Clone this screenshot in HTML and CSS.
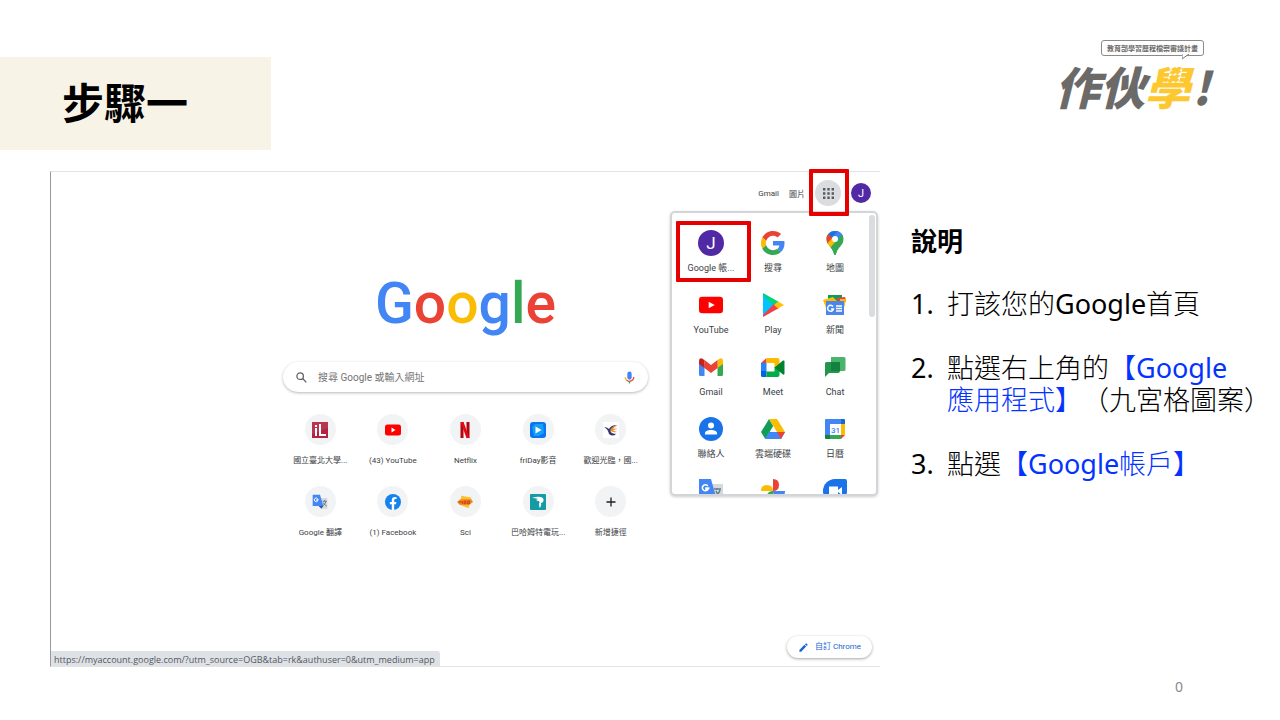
FILE: index.html
```html
<!DOCTYPE html>
<html lang="zh-Hant">
<head>
<meta charset="utf-8">
<meta name="viewport" content="width=device-width, initial-scale=1">
<title>步驟一</title>
<link rel="stylesheet" href="styles.css">
</head>
<body>
<div class="slide">
  <header class="slide-head">
    <h1 class="step-title">步驟一</h1>
    <div class="brand">
      <div class="brand-bubble">教育部學習歷程檔案審議計畫
        <svg class="brand-tail" viewBox="0 0 8 6" aria-hidden="true"><path d="M0 0v5l7-5" fill="#fff" stroke="#777" stroke-width="1"/></svg>
      </div>
      <div class="brand-name">作伙<span class="brand-accent">學</span><span class="brand-mark">!</span></div>
    </div>
  </header>

  <main class="content">
    <section class="browser" aria-label="Google 首頁">
      <nav class="topbar">
        <a href="#">Gmail</a>
        <a href="#">圖片</a>
        <button class="apps-button" type="button" aria-label="Google 應用程式">
          <svg viewBox="0 0 12 12" fill="#555a5f"><path d="M0 0h2.600v2.600H0zM4.700 0h2.600v2.600H4.700zM9.400 0H12v2.600H9.400zM0 4.700h2.600v2.600H0zM4.700 4.700h2.600v2.600H4.700zM9.400 4.700H12v2.600H9.400zM0 9.400h2.600V12H0zM4.700 9.400h2.600V12H4.700zM9.400 9.400H12V12H9.400z"/></svg>
        </button>
        <button class="avatar" type="button">J</button>
      </nav>

      <div class="home">
        <div class="wordmark" aria-label="Google"><span class="blue">G</span><span class="red">o</span><span class="yellow">o</span><span class="blue">g</span><span class="green">l</span><span class="red">e</span></div>
        <form class="search">
          <svg class="search-icon" viewBox="0 0 24 24" fill="none" stroke="#5f6368" stroke-width="2.400"><circle cx="9.500" cy="9.500" r="6"/><path d="M14 14l7 7"/></svg>
          <input type="text" aria-label="搜尋" placeholder="搜尋 Google 或輸入網址">
          <svg class="mic-icon" viewBox="0 0 24 24"><rect x="8" y="1" width="8" height="15" rx="4" fill="#4285f4"/><path d="M4 11c0 2.500.8 4.300 2.300 5.800" fill="none" stroke="#fbbc04" stroke-width="2.200"/><path d="M6.300 16.500A8 8 0 0 0 20 11" fill="none" stroke="#ea4335" stroke-width="2.200"/><path d="M12 19v4" stroke="#34a853" stroke-width="2.400"/></svg>
        </form>
        <ul class="shortcuts">
          <li><a href="#"><span class="disc"><svg viewBox="0 0 16 16"><rect width="16" height="16" fill="#b3223f"/><path d="M0 0h16v6L0 12z" fill="#c24a62" opacity=".5"/><path d="M3 6h2v8H3zM3 3h2v2H3zM7 2h2v10h5v2H7z" fill="#fff"/></svg></span>國立臺北大學...</a></li>
          <li><a href="#"><span class="disc"><svg viewBox="0 0 16 16"><rect y="2.500" width="16" height="11" rx="2.500" fill="#f00"/><path d="M6.500 5.500v5l4-2.500z" fill="#fff"/></svg></span>(43) YouTube</a></li>
          <li><a href="#"><span class="disc"><svg viewBox="0 0 16 16"><path d="M3.500 0h3v16h-3zM9.500 0h3v16h-3z" fill="#b1060f"/><path d="M3.500 0h3l6 16h-3z" fill="#e50914"/></svg></span>Netflix</a></li>
          <li><a href="#"><span class="disc"><svg viewBox="0 0 16 16"><rect width="16" height="16" rx="3" fill="#0874f0"/><path d="M2 5l3-3h8l1 9-5 3H4z" fill="#1bb5fa" opacity=".65"/><path d="M5.500 4.500v7l6-3.500z" fill="#fff"/></svg></span>friDay影音</a></li>
          <li><a href="#"><span class="disc"><svg viewBox="0 0 16 16"><path fill="#fff" d="M0 0h16v16H0z"/><path d="M1 5q3 0 5 2 2-4 8-4-4 1-6 5-2 3 5 4-3 3-7 0Q5 7 1 5" fill="#34376f"/><path d="M7 8q2-4 8-5-4 2-5 4 2-1 5 0-4 0-5 2 2 0 4 1-5 1-7-2z" fill="#ea8b35"/></svg></span>歡迎光臨，國...</a></li>
          <li><a href="#"><span class="disc"><svg viewBox="0 0 24 24"><path d="M10 6h13v16H14z" fill="#d5d8dc"/><path d="M1 1h11l5 17H1z" fill="#4285f4"/><path d="M10 18h7l-3 4z" fill="#2956b2"/><path d="M10 8.500H7v1.500h1.800A2.800 2.800 0 1 1 8.500 7" fill="none" stroke="#fff" stroke-width="1.500"/><path d="M16 11h6m-3-2v2m2 0q-1 4-5 7m1-5q1 3 5 5" fill="none" stroke="#617d8b" stroke-width="1.500"/></svg></span>Google 翻譯</a></li>
          <li><a href="#"><span class="disc"><svg viewBox="0 0 16 16"><circle cx="8" cy="8" r="8" fill="#1483ee"/><path d="M6.800 16v-5.700h-2V8h2V6.200c0-2 1.200-3.200 3-3.200l1.800.2v1.900h-1c-1 0-1.400.6-1.400 1.300V8h2.200l-.4 2.300H9.200V16z" fill="#fff"/></svg></span>(1) Facebook</a></li>
          <li><a href="#"><span class="disc"><svg viewBox="0 0 18 16"><path d="M5 1l11 2-3 12-10-4z" fill="#fbc02d"/><path d="M0 8l4-3h12l2 3-4 3H3z" fill="#f0841d"/><path d="M2 8h3m1-1v3m2-3h2v3H8zm4 0h2v3h-2z" fill="none" stroke="#c5351c" stroke-width="1"/></svg></span>Sci</a></li>
          <li><a href="#"><span class="disc"><svg viewBox="0 0 16 16"><rect width="16" height="16" rx="1" fill="#159ba3"/><path d="M2 4q5-2 9-1 3 1 2.500 4-1 2-2.500 2 1 2-1 5-1-1-1-4 1-2 0-3-2 0-3-1l2-1q-3-1-6-1" fill="#fff"/></svg></span>巴哈姆特電玩...</a></li>
          <li><a href="#"><span class="disc"><svg viewBox="0 0 16 16"><path d="M8 3.500v9M3.500 8h9" stroke="#202124" stroke-width="1.300"/></svg></span>新增捷徑</a></li>
        </ul>
      </div>

      <div class="browser-foot">
        <span class="status">https://myaccount.google.com/?utm_source=OGB&amp;tab=rk&amp;authuser=0&amp;utm_medium=app</span>
        <button class="customize" type="button"><svg viewBox="0 0 24 24" fill="#1a64d6"><path d="M3 17.200V21h3.800L17.800 10l-3.800-3.800zM20.700 7a1 1 0 0 0 0-1.400l-2.300-2.300a1 1 0 0 0-1.400 0l-1.800 1.800L19 8.900z"/></svg>自訂 Chrome</button>
      </div>

      <div class="apps-menu">
        <ul class="apps-grid">
          <li class="marked"><a href="#"><span class="app-avatar">J</span>Google 帳...</a></li>
          <li><a href="#"><svg viewBox="0 0 48 48"><path fill="#ea4335" d="M24 9.500c3.500 0 6.700 1.200 9.200 3.600l6.900-6.900C35.900 2.400 30.500 0 24 0 14.600 0 6.500 5.400 2.600 13.200l8 6.200C12.400 13.700 17.700 9.500 24 9.500z"/><path fill="#4285f4" d="M47 24.500c0-1.600-.2-3.100-.4-4.500H24v9h12.900c-.6 3-2.200 5.500-4.700 7.200l7.700 6C44.400 38 47 31.800 47 24.500z"/><path fill="#fbbc05" d="M10.500 28.600a14.500 14.500 0 0 1 0-9.200l-8-6.200a24 24 0 0 0 0 21.600z"/><path fill="#34a853" d="M24 48c6.500 0 11.900-2.100 15.900-5.800l-7.700-6c-2.200 1.500-4.900 2.300-8.200 2.300-6.300 0-11.600-4.200-13.500-9.900l-8 6.200C6.500 42.600 14.600 48 24 48z"/></svg>搜尋</a></li>
          <li><a href="#"><svg viewBox="0 0 24 24"><clipPath id="pin"><path d="M12 0C7.500 0 3.500 3.500 3.500 8c0 6 6 8 7.500 15q1 2 2 0c1.500-7 7.500-9 7.500-15 0-4.500-4-8-8.500-8z"/></clipPath><g clip-path="url(#pin)"><path fill="#34a853" d="M0 0h24v24H0z"/><path fill="#4285f4" d="M9 8l7-9h8v4L12 12z"/><path fill="#ea4335" d="M0 3h6l5 4-7 8-4-6z"/><path fill="#fbbc04" d="M3 14l7-8 5 3-8 9z"/><path fill="#1a73e8" d="M5 3l5 4 6-8H8z"/><path fill="#34a853" d="M7 17L20 2v12l-8 12z"/><path fill="#4285f4" d="M15 8l5-6-5-3-4 6z"/></g><circle cx="12" cy="8" r="3" fill="#fff"/></svg>地圖</a></li>
          <li><a href="#"><svg viewBox="0 0 26 26"><rect y="4" width="26" height="18" rx="3.500" fill="#f00"/><path d="M10.500 9.500v7l6.500-3.500z" fill="#fff"/></svg>YouTube</a></li>
          <li><a href="#"><svg viewBox="0 0 24 24"><path fill="#00c3ff" d="M2 1l11 11L2 23z"/><path fill="#00d27f" d="M2 0l16 9-5 4L2 2z"/><path fill="#f33d48" d="M2 24l16-9-5-4L2 22z"/><path fill="#ffc107" d="M17 8.500L23 12l-6 3.500-4-3.500z"/></svg>Play</a></li>
          <li><a href="#"><svg viewBox="0 0 24 24"><path fill="#0c9d58" d="M5 2h14v6H5z"/><path fill="#ea4335" d="M13 5l9-1 1 3-3 9z"/><path fill="#fbbc04" d="M0 7l10-3 5 5-12 6zM17 6h6l-2 9h-4z"/><path fill="#4c86ea" d="M3 8h18v14H3z"/><path d="M10 13.500A3 3 0 1 0 10.500 16H8M13 13h6m-6 2.500h6M13 18h6" fill="none" stroke="#fff" stroke-width="1.400"/></svg>新聞</a></li>
          <li><a href="#"><svg viewBox="0 0 24 24"><path fill="#4285f4" d="M0 6l5.500 4v11H1.500Q0 21 0 19.500z"/><path fill="#34a853" d="M24 6l-5.500 4v11h4Q24 21 24 19.500z"/><path fill="#fbbc04" d="M18.500 5L21 3.500q3-1 3 2.500v3l-5.500 4z"/><path fill="#ea4335" d="M5.500 5l6.500 5 6.500-5v8L12 18l-6.500-5z"/><path fill="#c5221f" d="M0 6q0-3.500 3-2.500L5.500 5v8L0 9z"/></svg>Gmail</a></li>
          <li><a href="#"><svg viewBox="0 0 24 24"><path fill="#ea4335" d="M5.500 3v5H0z"/><path fill="#2684fc" d="M0 8h5.500v8H0z"/><path fill="#0066da" d="M0 16h5.500v6H1.500Q0 22 0 20.500z"/><path fill="#ffba00" d="M5.500 3h11q2 0 2 2v4.500L13.500 13V8h-8z"/><path fill="#00ac47" d="M5.500 16.500h8V12l5 3.500V20q0 2-2 2h-11z"/><path fill="#00832d" d="M13.500 12.500L22 5.500q1.500-.5 1.500 1v12q0 1.500-1.500 1z"/></svg>Meet</a></li>
          <li><a href="#"><svg viewBox="0 0 24 24"><path fill="#31aa56" d="M8 2h13q1.500 0 1.500 1.500v11Q22.500 16 21 16H8z" opacity=".88"/><path fill="#23964b" d="M3.500 7H17v9q0 2-2 2H6l-4 4V8.500Q2 7 3.500 7z"/><path fill="#138140" d="M8 7h9v9H8z"/></svg>Chat</a></li>
          <li><a href="#"><svg viewBox="0 0 24 24"><circle cx="12" cy="12" r="12" fill="#1a73e8"/><circle cx="12" cy="8.500" r="3" fill="#fff"/><path d="M6 17.500v-1.300c0-4.300 12-4.300 12 0v1.300z" fill="#fff"/></svg>聯絡人</a></li>
          <li><a href="#"><svg viewBox="0 0 24 24"><path fill="#109d58" d="M8 2l4.200 7L4.300 22 0 15z"/><path fill="#fbbc04" d="M8 2h8l8 13h-8z"/><path fill="#4285f4" d="M8 15h16l-4 7H4z"/><path fill="#ea4335" d="M16 15h8l-4 7z"/></svg>雲端硬碟</a></li>
          <li><a href="#"><svg viewBox="0 0 24 24"><path fill="#4285f4" d="M3 2h15v5H7v11H2V3q0-1 1-1z"/><path fill="#1967d2" d="M18 2h3q1 0 1 1v4h-4z"/><path fill="#fbbc04" d="M18 7h4v11h-4z"/><path fill="#34a853" d="M7 18h11v4H7z"/><path fill="#188038" d="M2 18h5v4H3q-1 0-1-1z"/><path fill="#ea4335" d="M18 18h4l-4 4z"/><path fill="#fff" d="M7 7h11v11H7z"/><text class="cal-day" x="12.500" y="15.500" text-anchor="middle">31</text></svg>日曆</a></li>
          <li><a href="#" aria-label="翻譯"><svg viewBox="0 0 24 24"><path d="M10 5h14v17H14z" fill="#d5d8dc"/><path d="M0 0h12l5 18H0z" fill="#4285f4"/><path d="M10.500 9H7v1.600h1.800A3 3 0 1 1 8.800 7" fill="none" stroke="#fff" stroke-width="1.600"/><path d="M15 10h7m-4-1v2m3 0q-1 4-5 6m1-5q1 3 4 5" fill="none" stroke="#617d8b" stroke-width="1.400"/></svg></a></li>
          <li><a href="#" aria-label="相簿"><svg viewBox="0 0 24 24"><path d="M12 12V0q6 0 6 6t-6 6" fill="#ea4335"/><path d="M12 12H0q0-6 6-6t6 6" fill="#fbbc04"/><path d="M12 12h12q0 6-6 6t-6-6" fill="#4285f4"/><path d="M12 12v12q-6 0-6-6t6-6" fill="#34a853"/></svg></a></li>
          <li><a href="#" aria-label="Duo"><svg viewBox="0 0 24 24"><path d="M12 0h10q2 0 2 2v10a12 12 0 1 1-12-12z" fill="#1a73e8"/><path d="M6 7.500h9V11l4-3v8l-4-3v3.500H6z" fill="#fff"/></svg></a></li>
        </ul>
        <span class="scroll-thumb" aria-hidden="true"></span>
      </div>
    </section>

    <section class="notes">
      <h2>說明</h2>
      <ol>
        <li>打該您的Google首頁</li>
        <li>點選右上角的<span class="key">【Google<br>應用程式】</span>（九宮格圖案）</li>
        <li>點選<span class="key">【Google帳戶】</span></li>
      </ol>
    </section>
  </main>

  <footer class="page-number">0</footer>
</div>
</body>
</html>
```
FILE: styles.css
```css
* { box-sizing: border-box; }

body {
  margin: 0;
  background: #fff;
  color: #000;
  font-family: "Noto Sans", "Noto Sans CJK TC", sans-serif;
}

a { color: inherit; text-decoration: none; }
ul, ol { margin: 0; padding: 0; list-style: none; }
button { border: 0; padding: 0; font-family: inherit; }
svg { display: block; }

.slide {
  min-height: 100vh;
  display: flex;
  flex-direction: column;
}

/* Header */
.slide-head {
  display: flex;
  justify-content: space-between;
  align-items: flex-start;
  padding: 40px 64px 0 0;
}

.step-title {
  margin: 17px 0 0;
  padding: 16px 83px 17px 62px;
  background: #f7f3e7;
  font-size: 42px;
  line-height: 60px;
  font-weight: 700;
}

.brand {
  display: flex;
  flex-direction: column;
  align-items: flex-end;
  color: #6b6a68;
  font-family: "Noto Sans CJK TC", sans-serif;
}

.brand-bubble {
  position: relative;
  margin-right: 12px;
  padding: 0 5px;
  border: 1px solid #8a8a8a;
  border-radius: 3px;
  font-size: 7px;
  line-height: 14px;
  font-weight: 700;
}

.brand-tail {
  position: absolute;
  right: 13px;
  bottom: -5px;
  width: 8px;
  height: 6px;
}

.brand-name {
  margin-top: 3px;
  padding-right: 4px;
  font-size: 45px;
  line-height: 54px;
  font-weight: 900;
  font-style: italic;
}

.brand-accent { color: #fdc82f; }
.brand-mark { padding: 0 2px; }

/* Slide body */
.content {
  display: grid;
  grid-template-columns: minmax(0, 830fr) minmax(0, 369fr);
  column-gap: 31px;
  margin: 21px 0 0 50px;
}

.browser {
  position: relative;
  display: flex;
  flex-direction: column;
  min-height: 496px;
  border: solid #e4e4e4;
  border-width: 1px 0 1px 1px;
  border-left-color: #999;
  color: #3c4043;
  font-family: Roboto, "Noto Sans CJK TC", sans-serif;
}

.topbar {
  display: flex;
  justify-content: flex-end;
  align-items: center;
  gap: 10px;
  padding: 8px 9px 0 0;
  font-size: 8px;
}

.apps-button {
  position: relative;
  z-index: 1;
  display: grid;
  place-items: center;
  width: 26px;
  height: 26px;
  border-radius: 50%;
  background: #dadce0;
}

.apps-button svg { width: 11px; height: 11px; }

.apps-button::after {
  content: "";
  position: absolute;
  inset: -11px -8px -10px -6px;
  border: 4px solid #e60000;
  border-radius: 1px;
}

.avatar {
  width: 20px;
  height: 20px;
  border-radius: 50%;
  background: #5129a5;
  color: #fff;
  font-size: 11px;
}

.home {
  display: flex;
  flex-direction: column;
  align-items: center;
}

.wordmark {
  margin-top: 58px;
  font-size: 57px;
  line-height: 80px;
  font-weight: 500;
}

.blue { color: #4285f4; }
.red { color: #ea4335; }
.yellow { color: #fbbc05; }
.green { color: #34a853; }

.search {
  display: flex;
  align-items: center;
  gap: 10px;
  width: 365px;
  max-width: 90%;
  height: 30px;
  margin-top: 18px;
  padding: 0 12px;
  border-radius: 15px;
  box-shadow: 0 1px 3px rgba(32, 33, 36, .32);
}

.search-icon { width: 13px; height: 13px; }
.mic-icon { width: 13px; height: 13px; }

.search input {
  flex: 1;
  min-width: 0;
  padding: 0;
  border: 0;
  outline: 0;
  background: none;
  color: #3c4043;
  font: inherit;
  font-size: 10px;
}

.search input::placeholder { color: #757575; opacity: 1; }

.shortcuts {
  display: grid;
  grid-template-columns: repeat(5, 1fr);
  row-gap: 18px;
  width: 363px;
  max-width: 90%;
  margin-top: 22px;
}

.shortcuts a {
  display: flex;
  flex-direction: column;
  align-items: center;
  gap: 9px;
  font-size: 8px;
  line-height: 14px;
  white-space: nowrap;
}

.disc {
  display: grid;
  place-items: center;
  width: 31px;
  height: 31px;
  border-radius: 50%;
  background: #f1f3f4;
}

.disc svg { width: 16px; height: 16px; }

.browser-foot {
  display: flex;
  justify-content: space-between;
  align-items: flex-end;
  margin-top: auto;
  padding-right: 8px;
}

.status {
  padding: 2px 5px 0 3px;
  border-top-right-radius: 3px;
  background: #dee1e6;
  color: #54585c;
  font-family: "Open Sans", sans-serif;
  font-size: 9px;
  line-height: 13px;
}

.customize {
  display: flex;
  align-items: center;
  gap: 6px;
  margin-bottom: 8px;
  padding: 0 11px;
  border-radius: 11px;
  background: #fff;
  box-shadow: 0 1px 3px rgba(32, 33, 36, .4);
  color: #1a64d6;
  font-size: 8px;
  line-height: 22px;
}

.customize svg { width: 11px; height: 11px; }

/* App launcher menu */
.apps-menu {
  position: absolute;
  top: 39px;
  right: 2px;
  width: 208px;
  height: 285px;
  padding: 17px 8px 0;
  overflow: hidden;
  border: 2px solid #d3d5d8;
  border-radius: 5px;
  background: #fff;
  box-shadow: 0 1px 3px rgba(0, 0, 0, .2);
}

.apps-grid {
  display: grid;
  grid-template-columns: repeat(3, 62px);
  row-gap: 18px;
}

.apps-grid a {
  display: flex;
  flex-direction: column;
  align-items: center;
  gap: 6px;
  font-size: 9px;
  line-height: 12px;
  white-space: nowrap;
}

.apps-grid svg, .app-avatar {
  width: 26px;
  height: 26px;
}

.apps-grid svg { padding: 1px; }

.app-avatar {
  border-radius: 50%;
  background: #5129a5;
  color: #fff;
  font-size: 17px;
  line-height: 26px;
  text-align: center;
}

.cal-day { fill: #4285f4; font-size: 8px; font-weight: 500; }

.marked { position: relative; }

.marked::after {
  content: "";
  position: absolute;
  inset: -9px -9px -8px -4px;
  border: 4px solid #e60000;
  border-radius: 1px;
}

.scroll-thumb {
  position: absolute;
  top: 2px;
  right: 1px;
  width: 6px;
  height: 102px;
  border-radius: 3px;
  background: #dadce0;
}

/* Instructions */
.notes {
  padding-top: 53px;
  font-family: "Noto Sans", "Noto Sans CJK TC Light", "Noto Sans CJK TC", sans-serif;
  font-size: 27px;
  line-height: 32px;
  text-spacing-trim: space-all;
}

.notes h2 {
  margin: 0 0 32px;
  font-family: "Noto Sans CJK TC", sans-serif;
  font-size: 26px;
  font-weight: 700;
}

.notes ol {
  display: grid;
  row-gap: 32px;
  counter-reset: step;
}

.notes li {
  padding-left: 36px;
  white-space: nowrap;
  counter-increment: step;
}

.notes li::before {
  content: counter(step) ".";
  float: left;
  margin-left: -36px;
}

.key { color: #0432ff; }

.page-number {
  padding: 10px 97px 0 0;
  color: #898989;
  font-size: 14px;
  line-height: 20px;
  text-align: right;
}
```
